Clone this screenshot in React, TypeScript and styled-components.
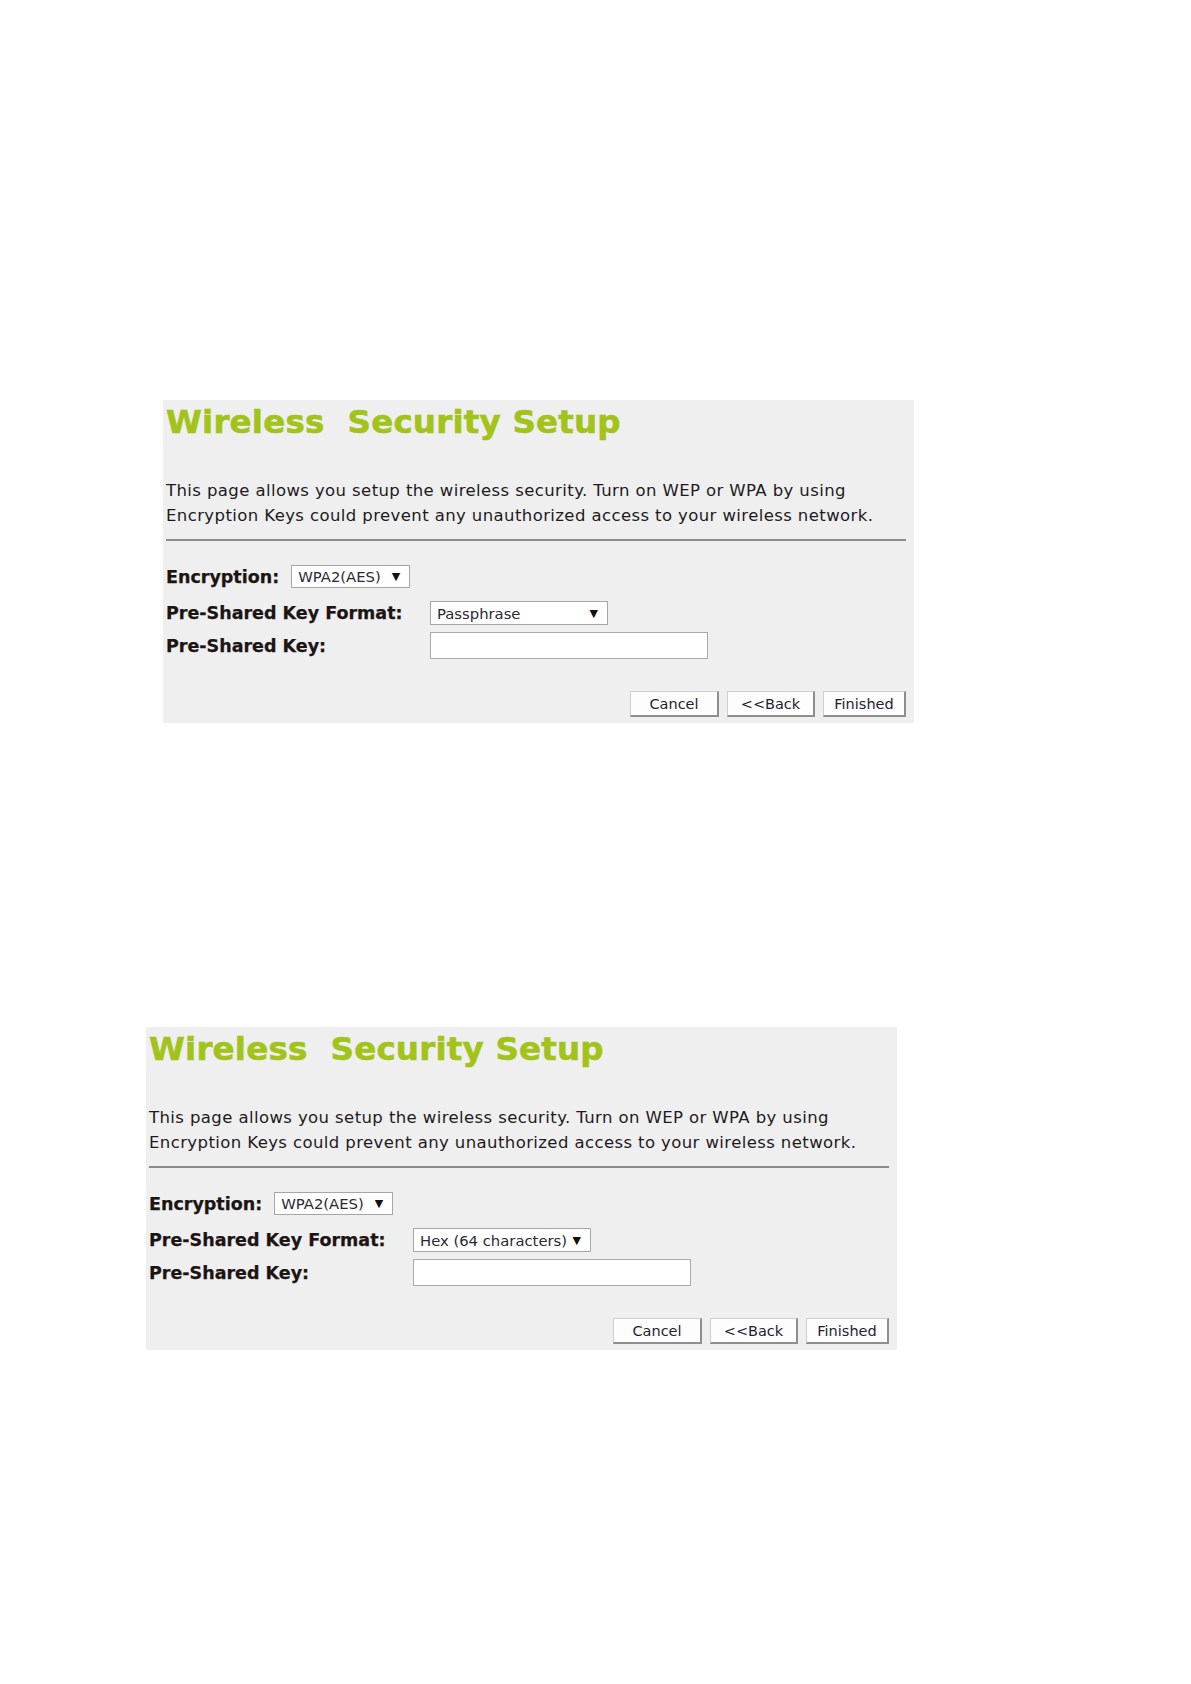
import React from "react";
import styled, { createGlobalStyle } from "styled-components";

const GlobalStyle = createGlobalStyle`
  html, body { margin: 0; padding: 0; background: #ffffff; }
  body { font-family: "DejaVu Sans", Verdana, sans-serif; }
`;

const Page = styled.div`
  display: flex;
  flex-direction: column;
  align-items: flex-start;
  padding-top: 400px;
  padding-bottom: 335px;
  gap: 304px;
`;

const Panel = styled.section<{ $left: number }>`
  box-sizing: border-box;
  margin-left: ${(p) => p.$left}px;
  width: 751px;
  height: 323px;
  background: #efefef;
  padding: 4px 8px 6px 3px;
  display: flex;
  flex-direction: column;
`;

const Title = styled.h1`
  margin: 0;
  font-family: "DejaVu Sans", Verdana, sans-serif;
  font-weight: bold;
  font-size: 32.5px;
  line-height: 36px;
  letter-spacing: 0.2px;
  color: #a2c31a;
  -webkit-text-stroke: 0.6px #a2c31a;
  white-space: pre;
`;

const Intro = styled.p`
  margin: 39px 0 0;
  font-family: "DejaVu Sans", Verdana, sans-serif;
  font-size: 16.5px;
  line-height: 24.5px;
  letter-spacing: 0.4px;
  color: #1e1a22;
`;

const Rule = styled.hr`
  margin: 11px 0 0;
  border: none;
  border-top: 2px solid #8c8c8c;
  height: 0;
`;

const Form = styled.div`
  display: flex;
  flex-direction: column;
  padding-top: 24px;
`;

const Row = styled.div<{ $gap?: number }>`
  display: flex;
  align-items: center;
  margin-top: ${(p) => p.$gap ?? 0}px;
`;

const Label = styled.span<{ $width?: number }>`
  font-family: "DejaVu Sans", Verdana, sans-serif;
  font-weight: bold;
  font-size: 17.5px;
  color: #1c1514;
  -webkit-text-stroke: 0.25px #1c1514;
  ${(p) => (p.$width ? `width: ${p.$width}px; flex: none;` : "margin-right: 12px;")}
`;

const SelectBox = styled.div<{ $width: number; $height: number }>`
  box-sizing: border-box;
  width: ${(p) => p.$width}px;
  height: ${(p) => p.$height}px;
  background: #ffffff;
  border: 1px solid #a6a6a6;
  display: flex;
  align-items: center;
  justify-content: space-between;
  padding: 0 9px 0 6px;
  font-family: "DejaVu Sans", Verdana, sans-serif;
  font-size: 14.8px;
  color: #2a2a33;
`;

const Arrow = styled.span`
  font-size: 11px;
  color: #111;
  line-height: 1;
`;

const TextInput = styled.div`
  box-sizing: border-box;
  width: 278px;
  height: 27px;
  background: #ffffff;
  border: 1px solid #a9a9a9;
`;

const Buttons = styled.div`
  display: flex;
  justify-content: flex-end;
  gap: 8px;
  margin-top: 32px;
`;

const Button = styled.div<{ $width: number }>`
  box-sizing: border-box;
  width: ${(p) => p.$width}px;
  height: 26px;
  background: #fdfdfd;
  border-top: 1px solid #d0d0d0;
  border-left: 1px solid #d0d0d0;
  border-right: 2px solid #8e8e8e;
  border-bottom: 2px solid #8e8e8e;
  display: flex;
  align-items: center;
  justify-content: center;
  font-family: "DejaVu Sans", Verdana, sans-serif;
  font-size: 14.5px;
  color: #1f1d33;
`;

type PanelProps = { left: number; format: string };

function SecurityPanel({ left, format }: PanelProps) {
  return (
    <Panel $left={left}>
      <Title>{"Wireless  Security Setup"}</Title>
      <Intro>
        This page allows you setup the wireless security. Turn on WEP or WPA by using
        <br />
        Encryption Keys could prevent any unauthorized access to your wireless network.
      </Intro>
      <Rule />
      <Form>
        <Row>
          <Label>Encryption:</Label>
          <SelectBox $width={119} $height={23}>
            <span>WPA2(AES)</span>
            <Arrow>▼</Arrow>
          </SelectBox>
        </Row>
        <Row $gap={13}>
          <Label $width={264}>Pre-Shared Key Format:</Label>
          <SelectBox $width={178} $height={24}>
            <span>{format}</span>
            <Arrow>▼</Arrow>
          </SelectBox>
        </Row>
        <Row $gap={7}>
          <Label $width={264}>Pre-Shared Key:</Label>
          <TextInput />
        </Row>
      </Form>
      <Buttons>
        <Button $width={89}>Cancel</Button>
        <Button $width={88}>&lt;&lt;Back</Button>
        <Button $width={83}>Finished</Button>
      </Buttons>
    </Panel>
  );
}

export default function App() {
  return (
    <>
      <GlobalStyle />
      <Page>
        <SecurityPanel left={163} format="Passphrase" />
        <SecurityPanel left={146} format="Hex (64 characters)" />
      </Page>
    </>
  );
}
